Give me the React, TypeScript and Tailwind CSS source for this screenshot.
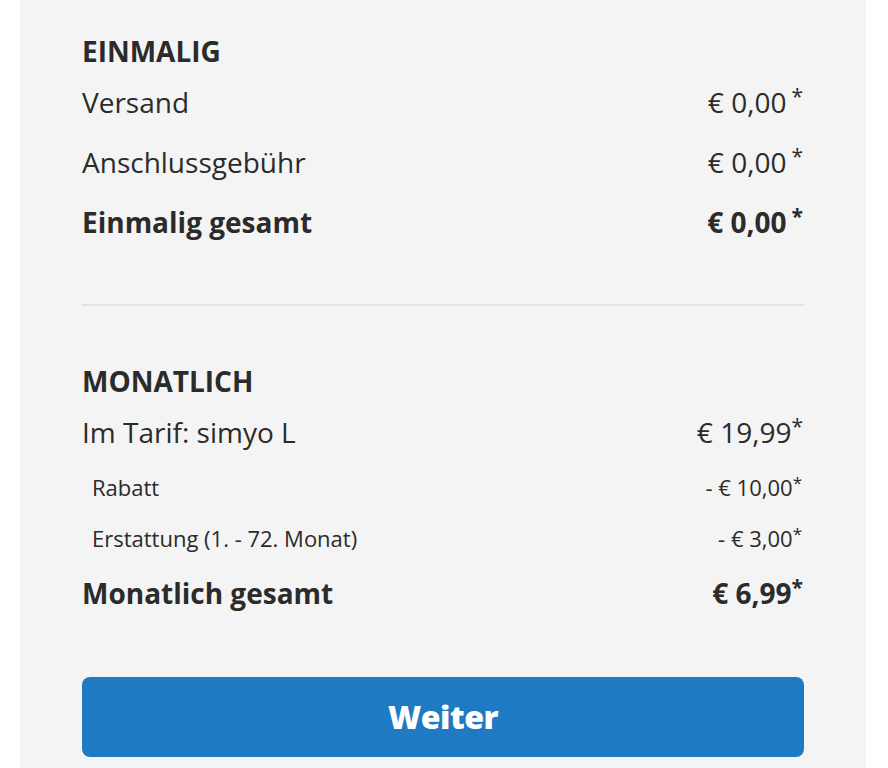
const font = { fontFamily: '"Open Sans", "Liberation Sans", sans-serif' };

type Line = { label: string; price: string; sub?: boolean; total?: boolean; gap?: boolean };

const einmalig: Line[] = [
  { label: 'Versand', price: '€ 0,00', gap: true },
  { label: 'Anschlussgebühr', price: '€ 0,00', gap: true },
  { label: 'Einmalig gesamt', price: '€ 0,00', total: true, gap: true },
];

const monatlich: Line[] = [
  { label: 'Im Tarif: simyo L', price: '€ 19,99' },
  { label: 'Rabatt', price: '- € 10,00', sub: true },
  { label: 'Erstattung (1. - 72. Monat)', price: '- € 3,00', sub: true },
  { label: 'Monatlich gesamt', price: '€ 6,99', total: true },
];

function Row({ line }: { line: Line }) {
  if (line.sub) {
    return (
      <div className="flex justify-between items-baseline pl-[10px] text-[22px] leading-[30px] h-[30px]">
        <span>{line.label}</span>
        <span className="pr-[2px]">
          {line.price}
          <span className="relative -top-[7px] text-[17px] leading-none">*</span>
        </span>
      </div>
    );
  }
  return (
    <div
      className={`flex justify-between items-baseline text-[28px] leading-[40px] h-[40px] ${line.total ? 'font-bold' : ''}`}
    >
      <span>{line.label}</span>
      <span className="pr-[1px]">
        {line.price}
        {line.gap ? <span className="inline-block w-[5px]" /> : null}
        <span className="relative -top-[9px] text-[21px] leading-none">*</span>
      </span>
    </div>
  );
}

export default function App() {
  return (
    <div className="min-h-screen bg-white" style={font}>
      <div className="ml-[20px] w-[846px] bg-[#f4f4f4] pl-[62px] pr-[62px] pt-[31px] pb-[20px] text-[#2b2b2b]">
        <h3 className="text-[28px] leading-[40px] font-bold">EINMALIG</h3>
        <div className="mt-[11px] flex flex-col gap-[20px]">
          {einmalig.map((l) => (
            <Row key={l.label} line={l} />
          ))}
        </div>

        <div className="mt-[62px] h-[2px] bg-[#e3e3e3]" />

        <h3 className="mt-[55px] text-[28px] leading-[40px] font-bold">MONATLICH</h3>
        <div className="mt-[11px] flex flex-col">
          <Row line={monatlich[0]} />
          <div className="mt-[20px] flex flex-col gap-[21px]">
            <Row line={monatlich[1]} />
            <Row line={monatlich[2]} />
          </div>
          <div className="mt-[20px]">
            <Row line={monatlich[3]} />
          </div>
        </div>

        <button className="mt-[64px] w-full h-[80px] rounded-[8px] bg-[#1f7ac4] text-white text-[32px] font-extrabold tracking-[-0.5px]">
          Weiter
        </button>
      </div>
    </div>
  );
}
